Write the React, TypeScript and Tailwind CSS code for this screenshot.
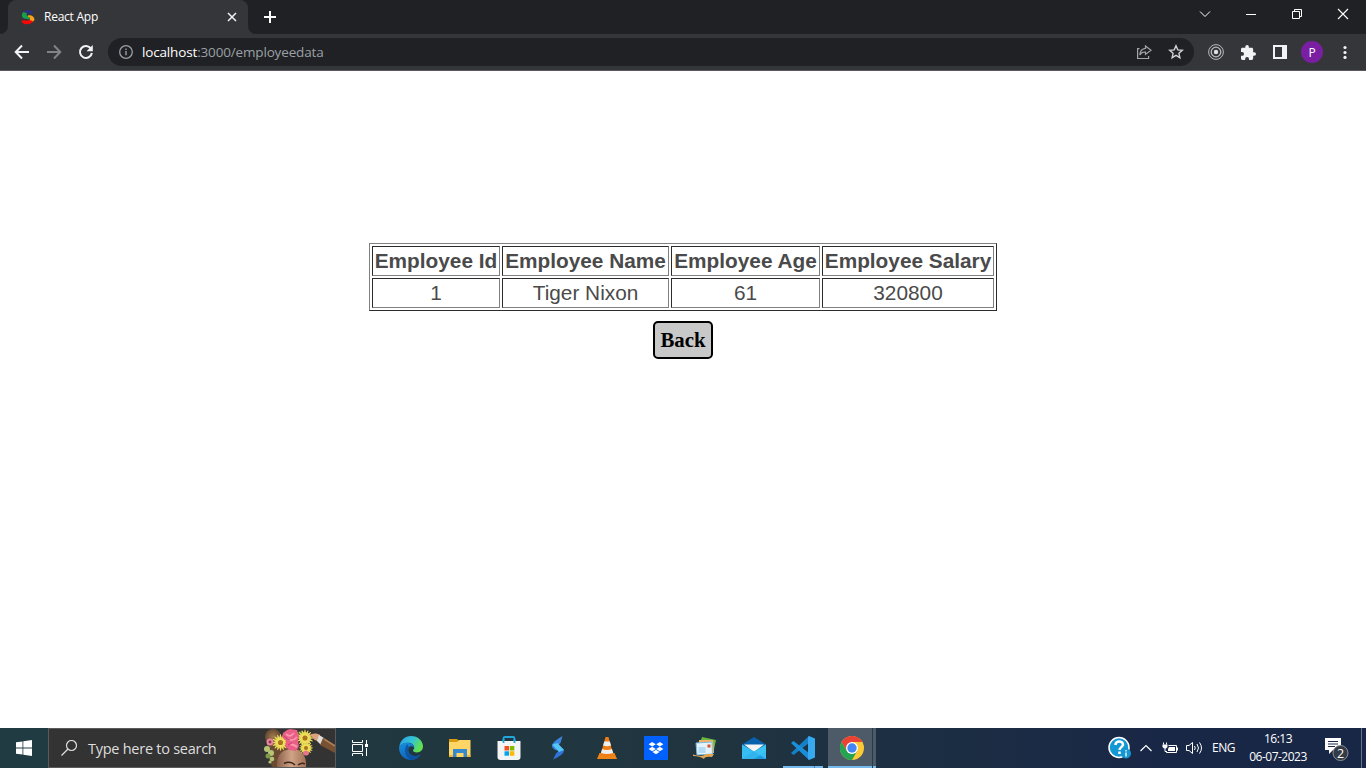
import type { ReactNode } from 'react';

function Favicon() {
  return (
    <svg width="14" height="16" viewBox="0 0 14 16" className="shrink-0">
      <path d="M2.500 3.200C4.500.3 10 .2 12.300 3.800L10.500 5.200C8 3.200 5 3.200 2.500 5z" fill="#2b2f86" />
      <path d="M2.400 3C.2 5 .4 8.400 3.200 9.600L9 10.500 8 7.200C5.500 7 5 5.500 6 4.200z" fill="#17a04a" />
      <path d="M7 6.200C10.500 5.800 13.800 7.600 13.400 11L11.500 13.200 8.500 11.400C9.800 9.800 9 8.400 7 7.800z" fill="#f7a01b" />
      <path d="M.6 11.200C3.500 11 6 12.200 8.800 11L12.200 12.200C9.500 16 3 16.500 .6 12.400z" fill="#fb0505" />
    </svg>
  );
}

function TabStrip() {
  return (
    <div className="flex h-[34px] bg-[#202124] text-white">
      <div className="flex w-2 items-end bg-[#35363a]"><div className="h-[34px] w-2 rounded-br-lg bg-[#202124]" /></div>
      <div className="flex w-60 items-center rounded-t-lg bg-[#35363a] pl-[13px] pr-[11px]">
        <Favicon />
        <span className="ml-[9px] flex-1 whitespace-nowrap font-['Open_Sans',sans-serif] text-[12px] tracking-[-0.25px]">React App</span>
        <svg width="10" height="10" viewBox="0 0 10 10" stroke="#f1f3f4" strokeWidth="1.5"><path d="M1 1l8 8M9 1L1 9" /></svg>
      </div>
      <div className="w-2 bg-[#35363a]"><div className="h-[34px] w-2 rounded-bl-lg bg-[#202124]" /></div>
      <svg className="ml-2 mt-[11px]" width="12" height="12" viewBox="0 0 12 12" stroke="#fff" strokeWidth="2"><path d="M6 0v12M0 6h12" /></svg>
      <div className="ml-auto flex h-7 items-center">
        <svg width="46" height="28" viewBox="0 0 46 28" fill="none" stroke="#fff"><path d="M18 11.500l5 5 5-5" /></svg>
        <svg width="46" height="28" viewBox="0 0 46 28" fill="none" stroke="#fff"><path d="M18 14.500h10" /></svg>
        <svg width="46" height="28" viewBox="0 0 46 28" fill="none" stroke="#fff"><path d="M18.500 11.500h7v7h-7zM20.500 11V9.500h7v7h-2" /></svg>
        <svg width="46" height="28" viewBox="0 0 46 28" fill="none" stroke="#fff" strokeWidth="1.100"><path d="M18 9l10 10M28 9L18 19" /></svg>
      </div>
    </div>
  );
}

function Toolbar() {
  return (
    <div className="flex h-[37px] items-center border-b border-[#5c555d] bg-[#35363a] font-['Open_Sans',sans-serif]">
      <svg className="ml-[14px]" width="16" height="16" viewBox="0 0 16 16" fill="none" stroke="#f1f3f4" strokeWidth="2"><path d="M15 8H2M8 1.500L1.700 8 8 14.500" /></svg>
      <svg className="ml-4" width="16" height="16" viewBox="0 0 16 16" fill="none" stroke="#828387" strokeWidth="2"><path d="M1 8h13M8 1.500L14.300 8 8 14.500" /></svg>
      <svg className="ml-4" width="16" height="16" viewBox="0 0 16 16"><path d="M13 4.600A6 6 0 1 0 13.900 9" fill="none" stroke="#f1f3f4" strokeWidth="2" /><path d="M14.800 1v6.300H8.500z" fill="#f1f3f4" /></svg>
      <div className="ml-[14px] flex h-7 w-[1086px] items-center rounded-full bg-[#202124] pl-[11px] pr-2.5">
        <svg width="14" height="14" viewBox="0 0 14 14" fill="none" stroke="#9aa0a6"><circle cx="7" cy="7" r="6.300" strokeWidth="1.300" /><path d="M7 6v4.300M7 3.600v1.400" strokeWidth="1.400" /></svg>
        <div className="ml-[9px] flex-1 whitespace-nowrap text-[13.5px] tracking-[-0.160px] text-[#9aa0a6]"><span className="text-white">localhost</span>:3000/employeedata</div>
        <svg width="16" height="16" viewBox="0 0 16 16" fill="none" stroke="#a4a6aa" strokeWidth="1.200"><path d="M3.500 4.600H1.600v9.900h11v-2.500M9.500 2l5.500 4.200-5.500 4.200V8C6.500 7.800 4.800 9 3.800 11c.3-4 2.500-6.300 5.700-6.600z" /></svg>
        <svg className="ml-4" width="16" height="16" viewBox="0 0 16 16" fill="none" stroke="#d0d2d5" strokeWidth="1.400"><path d="M8 1.800l1.800 4.100 4.500.4-3.400 3 1 4.400L8 11.400l-3.900 2.300 1-4.400-3.400-3 4.500-.4z" /></svg>
      </div>
      <svg className="ml-[14px]" width="16" height="16" viewBox="0 0 16 16" fill="none" stroke="#b8b9bc"><circle cx="8" cy="8" r="7.400" /><circle cx="8" cy="8" r="4.800" strokeWidth="1.300" /><circle cx="8" cy="8" r="2.200" fill="#dfe0e2" stroke="none" /></svg>
      <svg className="ml-[17px]" width="15" height="15" viewBox="2 1 21 21" fill="#f1f3f4"><path d="M20.500 11H19V7c0-1.100-.9-2-2-2h-4V3.500a2.500 2.500 0 0 0-5 0V5H4c-1.100 0-2 .9-2 2v3.800h1.500a2.700 2.700 0 0 1 0 5.400H2V20c0 1.100.9 2 2 2h3.800v-1.500a2.700 2.700 0 0 1 5.400 0V22H17c1.100 0 2-.9 2-2v-4h1.500a2.500 2.500 0 0 0 0-5z" /></svg>
      <svg className="ml-[17px]" width="14" height="14" viewBox="0 0 14 14"><path fill="#f1f3f4" fillRule="evenodd" d="M0 0h14v14H0zM2 2v10h7V2z" /></svg>
      <div className="ml-[14px] flex size-[22px] items-center justify-center rounded-full bg-[#7b1fa2] pt-px text-[12px] text-white">P</div>
      <svg className="ml-[19.5px]" width="4" height="14" viewBox="0 0 4 14" fill="#f1f3f4"><circle cx="2" cy="2.500" r="1.600" /><circle cx="2" cy="7.500" r="1.600" /><circle cx="2" cy="12.400" r="1.600" /></svg>
    </div>
  );
}

const columns = [
  { label: 'Employee Id', value: '1', width: 'w-[128px]' },
  { label: 'Employee Name', value: 'Tiger Nixon', width: 'w-[167px]' },
  { label: 'Employee Age', value: '61', width: 'w-[149px]' },
  { label: 'Employee Salary', value: '320800', width: 'w-[172px]' },
];

const cell = 'h-[30px] border border-t-[#2c2c2c] border-l-[#2c2c2c] border-r-[#808080] border-b-[#808080] p-0 text-center leading-[28px] whitespace-nowrap';

function EmployeeData() {
  return (
    <main className="flex h-[657px] flex-col items-center bg-white pt-[172px]">
      <table className="h-[68px] w-[628px] table-fixed border-separate border-spacing-[2px] border border-t-[#808080] border-l-[#808080] border-r-[#2c2c2c] border-b-[#2c2c2c] font-['Liberation_Sans',sans-serif] text-[20.8px] text-[#4a4a4a]">
        <thead><tr>{columns.map((c) => <th key={c.label} className={`${cell} ${c.width} font-bold`}>{c.label}</th>)}</tr></thead>
        <tbody><tr>{columns.map((c) => <td key={c.label} className={cell}>{c.value}</td>)}</tr></tbody>
      </table>
      <button className="mt-[10px] h-[38px] w-[60px] rounded-[5px] border-2 border-black bg-[#c8c8c8] font-['Liberation_Serif',serif] text-[20.8px] font-bold text-black">Back</button>
    </main>
  );
}

const petalAngles = [0, 22.5, 45, 67.5, 90, 112.5, 135, 157.5];

function Daisy({ x, y, r }: { x: number; y: number; r: number }) {
  return (
    <g transform={`translate(${x} ${y})`}>
      <circle r={r * 0.7} fill="#b9a02c" />
      {petalAngles.map((a) => <ellipse key={a} rx={r} ry={r * 0.13} transform={`rotate(${a})`} fill="#efdf5c" />)}
      <circle r={r * 0.3} fill="#a8741c" />
    </g>
  );
}

function SearchArt() {
  return (
    <svg width="71" height="38" viewBox="0 0 71 38" className="shrink-0">
      <defs>
        <linearGradient id="face" x2="1"><stop stopColor="#8a6049" /><stop offset=".5" stopColor="#cfa385" /><stop offset="1" stopColor="#a37257" /></linearGradient>
        <radialGradient id="bun"><stop stopColor="#a07c52" /><stop offset="1" stopColor="#68492f" /></radialGradient>
      </defs>
      <circle cx="9" cy="8" r="8" fill="url(#bun)" />
      <path d="M3 12C3 22 5 30 8 38h30L34 15 12 10z" fill="#6b4a33" />
      <path d="M13 38c-1-12 5-18 16-18 9 0 14 8 13 18z" fill="url(#face)" />
      <path d="M20 34.500q6-3 11 1.500M34 36q4-3 7-1" fill="none" stroke="#3c261c" strokeWidth="1.500" />
      <g fill="#b5c477">
        <circle cx="3" cy="20" r="3" /><circle cx="7" cy="24" r="3" /><circle cx="4" cy="27" r="2.500" fill="#7c9a48" /><circle cx="8" cy="30" r="2.300" /><circle cx="6" cy="33" r="1.600" />
        <path d="M32 4q7-5 10 2l-3 12z" fill="#567832" />
      </g>
      <Daisy x={41} y={9} r={8.500} />
      <Daisy x={42} y={19} r={7} />
      <Daisy x={16.500} y={13.500} r={8.500} />
      <path d="M19 4l4-3 3-1 7 1 2 6-1 5 1 5-3 5-7-1-4-4 1-5-4-4z" fill="#e95f85" />
      <path d="M22 5q4 4 8-1M24 10q5 3 9-2M26 15q5 1 7 3" fill="none" stroke="#fb98af" strokeWidth="1.800" />
      <path d="M20 7q4 4 6 4M24 16l4-2" fill="none" stroke="#c44069" />
      <circle cx="6" cy="13" r="3.500" fill="#e986a0" /><circle cx="6" cy="13" r="1.400" fill="#8f3550" /><circle cx="42" cy="24" r="2.600" fill="#e7748f" />
      <path d="M45 6c4-2 8-2 11 0l-2 6c-4 0-5-4-9-6z" fill="#dba17c" />
      <path d="M55 6l5 3-3 7-4-4z" fill="#e1dfdc" />
      <path d="M59 9l12 7v8L56 16z" fill="#785133" /><path d="M60 10l11 7" stroke="#ad8056" strokeWidth="1.500" />
    </svg>
  );
}

function EdgeIcon() {
  return (
    <svg width="24" height="24" viewBox="0 0 24 24">
      <defs>
        <linearGradient id="edgeTop" x2="1" y2=".4"><stop stopColor="#2b9de6" /><stop offset=".55" stopColor="#32c3d8" /><stop offset="1" stopColor="#63e04f" /></linearGradient>
        <linearGradient id="edgeLow" x2=".5" y2="1"><stop stopColor="#1791df" /><stop offset="1" stopColor="#1160b4" /></linearGradient>
      </defs>
      <path d="M.3 11C1 4.500 6 0 12 0c7 0 12 5 12 10.500 0 3.800-2.800 5.900-6 5.900-2.800 0-4-.9-4-1.800 0-.8 1.200-1.200 1.200-3.100 0-2.500-2.500-4.800-6-4.800C4.500 6.700 1.500 8.500.3 11z" fill="url(#edgeTop)" />
      <path d="M.1 11C1.500 8 5 6.500 8.500 6.700c4 .2 6.700 2.500 6.700 4.800-1-1.200-3-1.600-4.500-.8-2.500 1.300-2.500 9.300 5.800 9.300 2.400 0 4-.8 5.200-1.500C19.500 22 16 24 12 24 5 24-.5 18 .1 11z" fill="url(#edgeLow)" />
      <path d="M8.500 8C5 11 4.500 20 12 24c1.500 0 6-.5 9.700-5.500-1.500.9-3 1.500-5.200 1.500-7 0-8.800-6-6.500-8.600z" fill="#0d4f9e" opacity=".8" />
    </svg>
  );
}

const ExplorerIcon = () => (
  <svg width="22" height="20" viewBox="0 0 22 20"><path d="M0 1h8l2 2v5H0z" fill="#d99a13" /><path d="M0 4h8l2-2h11.500v17H0z" fill="#ffd665" /><path d="M4 11h14v8h-3.500v-4h-7v4H4z" fill="#3489cf" /><path d="M0 17h4v2H0zM18 17h3.500v2H18z" fill="#f1b82f" /></svg>
);
const StoreIcon = () => (
  <svg width="24" height="24" viewBox="0 0 24 24"><path d="M6.500 8V2.500q0-1.500 1.500-1.500h8q1.500 0 1.500 1.500V8" fill="none" stroke="#22a7dd" strokeWidth="1.800" /><path d="M.5 5h23v16q0 3-3 3h-17q-3 0-3-3z" fill="#f3f4f5" /><path d="M6.500 7V3M17.500 7V3" stroke="#22a7dd" strokeWidth="1.800" /><path d="M7.500 10H12v4.500H7.500z" fill="#f25022" /><path d="M12.800 10h4.500v4.500h-4.500z" fill="#7fba00" /><path d="M7.500 15.300H12v4.400H7.500z" fill="#00a4ef" /><path d="M12.800 15.300h4.500v4.400h-4.500z" fill="#ffb900" /></svg>
);
const StreamIcon = () => (
  <svg width="14" height="24" viewBox="0 0 14 24"><path d="M11.500 0C6 3 1 7 1 10c0 1.500 1.500 3 4.500 4.500L8 11.500 6.500 9.500 9.500 7z" fill="#3b86e0" /><path d="M2 23.500C8 21 13 17.500 13 14.500c0-1.500-2-3-5-4L5.500 13l2 2-2.500 2.500z" fill="#2f74d8" /><path d="M1.300 8.500L6.500 7l6.500 7-5 2z" fill="#55c5f5" /></svg>
);
const VlcIcon = () => (
  <svg width="20" height="22" viewBox="0 0 20 22"><path d="M2.500 16h15l2.500 6H0z" fill="#ee8417" /><path d="M8.500 0h3L16.500 18q-6.500 3-13 0z" fill="#ef7d13" /><path d="M7.300 4.500h5.500l1.300 4q-4 1.500-8 0zM5.100 12q5 2 9.900 0l1.200 4q-6 2-12.300 0z" fill="#eee" /></svg>
);
const DropboxIcon = () => (
  <svg width="24" height="24" viewBox="0 0 24 24"><path d="M0 0h24v24H0z" fill="#0061fe" /><path d="M8.200 6l3.600 2.200-3.600 2.300-3.600-2.300zM15.800 6l3.600 2.200-3.600 2.300-3.600-2.300zM8.200 10.700l3.600 2.300-3.600 2.300L4.600 13zM15.800 10.700l3.600 2.300-3.600 2.300-3.600-2.300zM12 13.700l3.500 2.200L12 18.200l-3.500-2.300z" fill="#fff" /></svg>
);
const PhotosMailIcon = () => (
  <svg width="24" height="22" viewBox="0 0 24 22"><path d="M9 0l14 3-3 14L5 12z" fill="#68b840" /><path d="M6 3l14 0 1 13-16 0z" fill="#f0b36d" /><path d="M3 6l16-1 .5 12L4 18z" fill="#e5f2fa" stroke="#79b9dd" /><path d="M5.500 10h7v6h-7z" fill="#b4dbf4" /><path d="M14.500 7.500h3v3h-3z" fill="#d95023" /><path d="M0 17.500q9 3 13-.5h8l-2 3q-7-1-8 2-4-3-11-3z" fill="#dfa550" /></svg>
);
const MailIcon = () => (
  <svg width="24" height="22" viewBox="0 0 24 22"><path d="M0 7.500L12 0l12 7.500V13H0z" fill="#0960ad" /><path d="M2 7.500h20L12 15z" fill="#f5f5f5" /><path d="M0 7.500L12 14.500 24 7.500V22H0z" fill="#36bdf3" /><path d="M12 14.500L24 22H0z" fill="#1d9ae2" /><path d="M12 14.500L0 22h12l12-7.500V7.500z" fill="#3fc7f5" opacity=".6" /></svg>
);
const CodeIcon = () => (
  <svg width="24" height="24" viewBox="0 0 24 24"><path d="M18 0v7L2.500 19 0 17z" fill="#1680c7" /><path d="M18 24v-7L2.500 5 0 7z" fill="#198fd9" /><path d="M18 0l6 2.500v19L18 24l-1-1V1z" fill="#37a9ef" /></svg>
);
const ChromeIcon = () => (
  <svg width="24" height="24" viewBox="0 0 24 24"><circle cx="12" cy="12" r="12" fill="#fcc934" /><path d="M1.600 6a12 12 0 0 1 20.800 0H12L6.800 15z" fill="#ea4335" /><path d="M1.600 6l5.200 9L12 18l5.200-3-5.200 9A12 12 0 0 1 1.600 6z" fill="#24a352" /><circle cx="12" cy="12" r="6" fill="#fff" /><circle cx="12" cy="12" r="4.700" fill="#4285f4" /></svg>
);

function TaskButton({ children }: { children: ReactNode }) {
  return <div className="flex w-[49px] items-center justify-center">{children}</div>;
}

function Taskbar() {
  return (
    <footer className="flex h-10 bg-linear-to-r from-[#213b43] from-0% via-[#20353f] via-50% to-[#192746] to-85% font-['Open_Sans',sans-serif] text-white">
      <div className="flex w-12 items-center justify-center">
        <svg width="16" height="16" viewBox="0 0 16 16" fill="#fff"><path d="M0 2.300l6.500-.9v6.200H0zM7.300 1.300L16 0v7.600H7.300zM0 8.400h6.500v6.200L0 13.700zM7.300 8.400H16V16l-8.700-1.300z" /></svg>
      </div>
      <div className="flex w-72 items-center border border-[#5b5b5b] bg-[#333] pl-3">
        <svg width="16" height="16" viewBox="0 0 16 16" fill="none" stroke="#ddd" strokeWidth="1.200"><circle cx="10.500" cy="5.500" r="5" /><path d="M7 9L.5 15.500" /></svg>
        <span className="ml-[11px] flex-1 whitespace-nowrap pt-0.5 text-[14.5px] tracking-[-0.260px] text-[#dedede]">Type here to search</span>
        <SearchArt />
      </div>
      <div className="mr-0.5 flex w-12 items-center justify-center">
        <svg width="16" height="16" viewBox="0 0 16 16" fill="none" stroke="#fff"><path d="M.5 0v2.500h10V0M.5 16v-2.500h10V16M.5 4.500h10v7H.5zM14.500 0v4M14.500 8v8" /><path d="M13 4h3v3h-3z" fill="#fff" stroke="none" /></svg>
      </div>
      <TaskButton><EdgeIcon /></TaskButton>
      <TaskButton><ExplorerIcon /></TaskButton>
      <TaskButton><StoreIcon /></TaskButton>
      <TaskButton><StreamIcon /></TaskButton>
      <TaskButton><VlcIcon /></TaskButton>
      <TaskButton><DropboxIcon /></TaskButton>
      <TaskButton><PhotosMailIcon /></TaskButton>
      <TaskButton><MailIcon /></TaskButton>
      <div className="mr-px flex w-[49px] flex-col items-center pt-2"><CodeIcon /><div className="mt-1.5 flex h-0.5 w-10 bg-[#76b9ed]"><div className="ml-[31px] w-px bg-[#4f7ca0]" /></div></div>
      <div className="flex w-11 flex-col items-center bg-[#4c5b67]"><div className="flex flex-1 items-center pl-1 pt-0.5"><ChromeIcon /></div><div className="h-0.5 w-full bg-[#76b9ed]" /></div>
      <div className="flex w-1 flex-col border-l border-[#293c4a] bg-[#4c5b67]"><div className="mt-auto h-0.5 bg-[#76b9ed]" /></div>
      <div className="ml-auto flex items-center">
        <svg width="24" height="24" viewBox="0 0 24 24"><circle cx="11" cy="11.500" r="10" fill="#1298d5" stroke="#fff" strokeWidth="1.500" /><path d="M7.500 9c0-5 7.500-4.500 7.500-.5 0 2.500-3.500 2.800-3.500 5.500M11.500 15.500V18" fill="none" stroke="#fff" strokeWidth="2.500" /><circle cx="18" cy="17.500" r="5" fill="#1596d1" /><path d="M18 16.500v4M18 14v1.500" stroke="#fff" strokeWidth="1.300" /></svg>
        <svg className="ml-2" width="12" height="8" viewBox="0 0 12 8" fill="none" stroke="#fff" strokeWidth="1.200"><path d="M.5 7L6 1.500 11.500 7" /></svg>
        <svg className="ml-2.5" width="17" height="13" viewBox="0 0 17 13" fill="none" stroke="#fff"><path d="M6.500 3.500h8v7h-10V9M15.500 5.500v3" /><path d="M7 5h6v4H6V7zM.5 2.500h5V5L4 6.500H2L.5 5z" fill="#fff" stroke="none" /><path d="M1.500.5v2M4.500.5v2M3 6v3.500h2" /></svg>
        <svg className="ml-[7px]" width="17" height="14" viewBox="0 0 17 14" fill="none" stroke="#fff"><path d="M.5 4.500H3L6.500 1.500v11L3 9.500H.5zM8.500 5q1.500 2 0 4M11 3q3 4 0 8M13.500 1.500q4 5.500 0 11" /></svg>
        <span className="ml-[9px] w-[25px] whitespace-nowrap text-[12px] tracking-[-0.500px]">ENG</span>
        <div className="ml-2.5 w-[62px] text-center text-[12px] leading-[18px] tracking-[-0.500px] whitespace-nowrap"><div>16:13</div><div>06-07-2023</div></div>
        <svg className="ml-[15px]" width="26" height="26" viewBox="0 0 26 26"><path d="M1 3h16v12H9l-4 4v-4H1z" fill="#fff" /><path d="M4 6.500h10M4 9h10M4 11.500h7" stroke="#1d2b48" /><circle cx="16.500" cy="18" r="7.500" fill="#353b45" stroke="#8a9099" /><text x="16.500" y="22.500" textAnchor="middle" fill="#fff" fontFamily="Open Sans" fontSize="12.500">2</text></svg>
        <div className="ml-[11px] h-10 w-[5px] border-l border-[#65708a]" />
      </div>
    </footer>
  );
}

export default function App() {
  return <div className="flex h-[768px] w-[1366px] flex-col overflow-hidden bg-white"><TabStrip /><Toolbar /><EmployeeData /><Taskbar /></div>;
}
